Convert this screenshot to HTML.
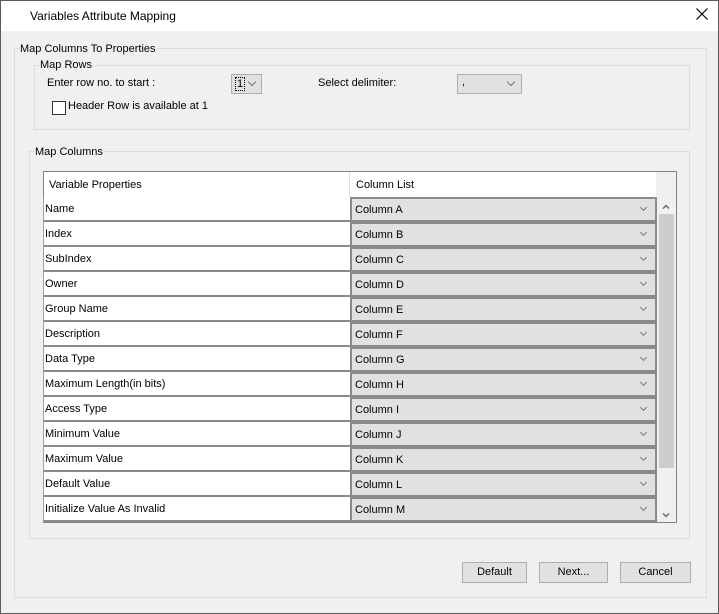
<!DOCTYPE html>
<html><head><style>
*{margin:0;padding:0;box-sizing:border-box}
body{width:719px;height:614px;background:#f0f0f0;font-family:"Liberation Sans",Arial,sans-serif;font-size:11px;color:#000;position:relative;overflow:hidden}
.win{position:absolute;left:0;top:0;width:719px;height:614px;border:1px solid #5a5a5a}
.title{position:absolute;left:1px;top:1px;width:717px;height:30px;background:#fff}
.a{position:absolute}
.grp{position:absolute;border:1px solid #dcdcdc}
.lbl{position:absolute;background:#f0f0f0;padding:0 1px;font-size:11px;line-height:14px}
.combo{position:absolute;background:#e1e1e1;border:1px solid #adadad}
.chev{position:absolute;width:6px;height:6px;border-right:1px solid #555;border-bottom:1px solid #555;transform:rotate(45deg)}
.btn{position:absolute;background:#e1e1e1;border:1px solid #adadad;text-align:center;line-height:19px}
.lc{position:absolute;left:43px;width:307px;height:25px;background:#fff;border-bottom:2px solid #8a8a8a;border-left:1px solid #a0a0a0;padding-left:1px;line-height:25px;font-size:11px}
.rc{position:absolute;left:350px;width:307px;height:25px;background:#e1e1e1;border:2px solid #8a8a8a;padding-left:3px;line-height:22px;font-size:11px}
.rc .chev{right:9px;top:6px;width:5px;height:5px;border-color:#777}
</style></head><body>
<div class="win"></div>
<div class="title"></div>
<div class="a" style="left:30px;top:9px;font-size:12px">Variables Attribute Mapping</div>
<svg class="a" style="left:696px;top:8px" width="12" height="12"><path d="M0.5 0.5L11.5 11.5M11.5 0.5L0.5 11.5" stroke="#000" stroke-width="1.2"/></svg>

<div class="grp" style="left:14px;top:48px;width:693px;height:550px"></div>
<div class="lbl" style="left:19px;top:42px">Map Columns To Properties</div>

<div class="grp" style="left:34px;top:65px;width:656px;height:65px"></div>
<div class="lbl" style="left:39px;top:58px">Map Rows</div>
<div class="a" style="left:47px;top:77px">Enter row no. to start :</div>
<div class="combo" style="left:231px;top:74px;width:31px;height:20px"><span style="position:absolute;left:3px;top:2px;border:1px dotted #000;line-height:12px;padding:0 1px">1</span><div class="chev" style="left:17px;top:4px;border-color:#777"></div></div>
<div class="a" style="left:318px;top:77px">Select delimiter:</div>
<div class="combo" style="left:457px;top:74px;width:65px;height:20px"><span style="position:absolute;left:4px;top:1px">,</span><div class="chev" style="left:50px;top:4px;border-color:#777"></div></div>
<div class="a" style="left:52px;top:101px;width:14px;height:14px;border:1px solid #333;background:#fff"></div>
<div class="a" style="left:68px;top:100px">Header Row is available at 1</div>

<div class="grp" style="left:29px;top:151px;width:661px;height:388px"></div>
<div class="lbl" style="left:34px;top:145px">Map Columns</div>

<div class="a" style="left:43px;top:171px;width:634px;height:352px;border:1px solid #828282;background:#f0f0f0"></div>
<div class="a" style="left:44px;top:172px;width:612px;height:25px;background:#fff"></div>
<div class="a" style="left:349px;top:172px;width:1px;height:25px;background:#e0e0e0"></div>
<div class="a" style="left:49px;top:179px;font-size:11px">Variable Properties</div>
<div class="a" style="left:356px;top:179px;font-size:11px">Column List</div>
<div class="a" style="left:657px;top:197px;width:19px;height:325px;background:#f0f0f0"></div>
<div class="a" style="left:659px;top:214px;width:15px;height:254px;background:#cdcdcd"></div>
<svg class="a" style="left:662px;top:204px" width="8" height="6"><path d="M1 4.5L4 1.5L7 4.5" stroke="#606060" stroke-width="1.3" fill="none"/></svg>
<svg class="a" style="left:662px;top:512px" width="8" height="6"><path d="M1 1.5L4 4.5L7 1.5" stroke="#606060" stroke-width="1.3" fill="none"/></svg>

<div class="lc" style="top:197px">Name</div><div class="rc" style="top:197px">Column A<div class="chev"></div></div>
<div class="lc" style="top:222px">Index</div><div class="rc" style="top:222px">Column B<div class="chev"></div></div>
<div class="lc" style="top:247px">SubIndex</div><div class="rc" style="top:247px">Column C<div class="chev"></div></div>
<div class="lc" style="top:272px">Owner</div><div class="rc" style="top:272px">Column D<div class="chev"></div></div>
<div class="lc" style="top:297px">Group Name</div><div class="rc" style="top:297px">Column E<div class="chev"></div></div>
<div class="lc" style="top:322px">Description</div><div class="rc" style="top:322px">Column F<div class="chev"></div></div>
<div class="lc" style="top:347px">Data Type</div><div class="rc" style="top:347px">Column G<div class="chev"></div></div>
<div class="lc" style="top:372px">Maximum Length(in bits)</div><div class="rc" style="top:372px">Column H<div class="chev"></div></div>
<div class="lc" style="top:397px">Access Type</div><div class="rc" style="top:397px">Column I<div class="chev"></div></div>
<div class="lc" style="top:422px">Minimum Value</div><div class="rc" style="top:422px">Column J<div class="chev"></div></div>
<div class="lc" style="top:447px">Maximum Value</div><div class="rc" style="top:447px">Column K<div class="chev"></div></div>
<div class="lc" style="top:472px">Default Value</div><div class="rc" style="top:472px">Column L<div class="chev"></div></div>
<div class="lc" style="top:497px;height:25px">Initialize Value As Invalid</div><div class="rc" style="top:497px">Column M<div class="chev"></div></div>

<div class="btn" style="left:462px;top:562px;width:65px;height:21px">Default</div>
<div class="btn" style="left:539px;top:562px;width:69px;height:21px">Next...</div>
<div class="btn" style="left:620px;top:562px;width:71px;height:21px">Cancel</div>
</body></html>
